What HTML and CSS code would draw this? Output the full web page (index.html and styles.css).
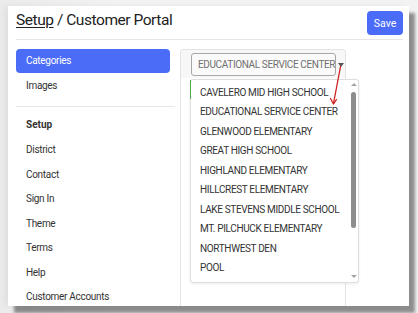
FILE: index.html
```html
<!DOCTYPE html>
<html lang="en">
<head>
<meta charset="utf-8">
<title>Setup / Customer Portal</title>
<link rel="stylesheet" href="styles.css">
</head>
<body>
<div class="window">
  <header class="top">
    <h1 class="title"><span class="crumb">Setup</span> / Customer Portal</h1>
    <button class="btn-save" type="button">Save</button>
  </header>
  <div class="main">
    <nav class="side">
      <a class="nav-item active">Categories</a>
      <a class="nav-item">Images</a>
      <hr class="rule">
      <div class="nav-item nav-head">Setup</div>
      <a class="nav-item">District</a>
      <a class="nav-item">Contact</a>
      <a class="nav-item">Sign In</a>
      <a class="nav-item">Theme</a>
      <a class="nav-item">Terms</a>
      <a class="nav-item">Help</a>
      <a class="nav-item">Customer Accounts</a>
    </nav>
    <section class="card">
      <div class="card-head">
        <div class="select">EDUCATIONAL SERVICE CENTER</div>
        <span class="caret"></span>
      </div>
      <div class="dropdown">
        <ul class="options">
          <li>CAVELERO MID HIGH SCHOOL</li>
          <li>EDUCATIONAL SERVICE CENTER</li>
          <li>GLENWOOD ELEMENTARY</li>
          <li>GREAT HIGH SCHOOL</li>
          <li>HIGHLAND ELEMENTARY</li>
          <li>HILLCREST ELEMENTARY</li>
          <li>LAKE STEVENS MIDDLE SCHOOL</li>
          <li>MT. PILCHUCK ELEMENTARY</li>
          <li>NORTHWEST DEN</li>
          <li>POOL</li>
        </ul>
        <div class="scroll">
          <span class="arr arr-up"></span>
          <span class="thumb"></span>
          <span class="arr arr-down"></span>
        </div>
      </div>
    </section>
  </div>
</div>
<svg class="annot" width="418" height="313" viewBox="0 0 418 313" aria-hidden="true">
  <line x1="340.5" y1="66.5" x2="333.5" y2="103.5" stroke="#cf1f1f" stroke-width="1.3" stroke-linecap="round"/>
  <polyline points="330.5,98.5 333.5,104 336.5,99.5" fill="none" stroke="#cf1f1f" stroke-width="1.3" stroke-linecap="round" stroke-linejoin="round"/>
</svg>
</body>
</html>
```
FILE: styles.css
```css
* { box-sizing: border-box; }

html, body {
  margin: 0;
  padding: 0;
}

body {
  position: relative;
  width: 418px;
  height: 313px;
  overflow: hidden;
  background: linear-gradient(90deg, #ebebeb, #f3f3f3 30%, #f3f3f3);
  font-family: Roboto, "Open Sans", sans-serif;
  color: #333;
  padding-top: 6px;
  padding-left: 8px;
}

.window {
  position: relative;
  width: 401px;
  height: 300px;
  background: #fff;
  box-shadow: 6px 7px 3px rgba(0, 0, 0, 0.42), -3px 0 6px rgba(0, 0, 0, 0.06);
}

.top {
  display: flex;
  justify-content: space-between;
  align-items: flex-start;
  height: 34px;
  margin: 0 6px 0 8px;
  padding-top: 5px;
  border-bottom: 1px solid #e6e6e6;
}

.title {
  margin: 0;
  font-size: 15.5px;
  letter-spacing: -0.45px;
  line-height: 18px;
  font-weight: 400;
  color: #222;
}

.crumb {
  text-decoration: underline;
  text-underline-offset: 2px;
  text-decoration-thickness: 1px;
}

.btn-save {
  width: 36px;
  height: 24px;
  padding: 0;
  border: 0;
  border-radius: 4px;
  background: #4a6cf7;
  color: #fff;
  font-family: Roboto, "Open Sans", sans-serif;
  font-size: 10.5px;
}

.main {
  display: flex;
  height: 266px;
}

.side {
  width: 172px;
  padding: 9px 10px 0 8px;
}

.nav-item {
  display: block;
  height: 24px;
  line-height: 24px;
  padding-left: 10px;
  margin-bottom: 0.5px;
  font-size: 10px;
  letter-spacing: -0.3px;
  color: #333;
  border-radius: 4px;
  white-space: nowrap;
}

.nav-item.active {
  background: #4a6cf7;
  color: #fff;
  margin-bottom: 1px;
}

.nav-head {
  font-weight: 700;
  letter-spacing: 0;
  margin-bottom: 1px;
}

.rule {
  border: 0;
  border-top: 1px solid #e8e8e8;
  margin: 8px -5px 6px 0;
  height: 0;
}

.card {
  position: relative;
  width: 166px;
  margin-top: 9px;
  border: 1px solid #e3e3e3;
  border-bottom: 0;
  border-radius: 4px 4px 0 0;
}

.card-head {
  display: flex;
  align-items: center;
  padding: 3px 0 2px 10px;
  background: #f7f7f7;
  border-radius: 4px 4px 0 0;
}

.select {
  width: 145px;
  height: 23px;
  padding-left: 6px;
  border: 1px solid #a8a8a8;
  border-radius: 3px;
  background: #fafafa;
  font-size: 10px;
  letter-spacing: -0.37px;
  line-height: 21px;
  color: #707070;
  white-space: nowrap;
  overflow: hidden;
}

.caret {
  width: 0;
  height: 0;
  margin-left: 2px;
  border-left: 3px solid transparent;
  border-right: 3px solid transparent;
  border-top: 4px solid #555;
}

.dropdown {
  position: absolute;
  left: 9px;
  top: 29px;
  width: 169px;
  height: 204px;
  display: flex;
  background: #fff;
  border: 1px solid #dedede;
  border-radius: 3px;
  box-shadow: 0 1px 3px rgba(0, 0, 0, 0.08);
}

.dropdown::before {
  content: "";
  position: absolute;
  left: -1px;
  top: 0;
  height: 19px;
  border-left: 1px solid #4cae4c;
}

.options {
  flex: 1;
  list-style: none;
  margin: 0;
  padding: 2.5px 0 0 9px;
}

.options li {
  font-size: 10px;
  letter-spacing: -0.35px;
  line-height: 19.5px;
  color: #333;
  white-space: nowrap;
}

.scroll {
  width: 9px;
  display: flex;
  flex-direction: column;
  align-items: center;
  padding: 3px 0 4px;
}

.arr {
  width: 0;
  height: 0;
  border-left: 3px solid transparent;
  border-right: 3px solid transparent;
}

.arr-up {
  border-bottom: 3px solid #a3a3a3;
}

.arr-down {
  margin-top: auto;
  border-top: 3px solid #a3a3a3;
}

.thumb {
  width: 5px;
  height: 136px;
  margin-top: 6px;
  border-radius: 3px;
  background: #8d8d8d;
}

.annot {
  position: absolute;
  left: 0;
  top: 0;
  pointer-events: none;
}
```
